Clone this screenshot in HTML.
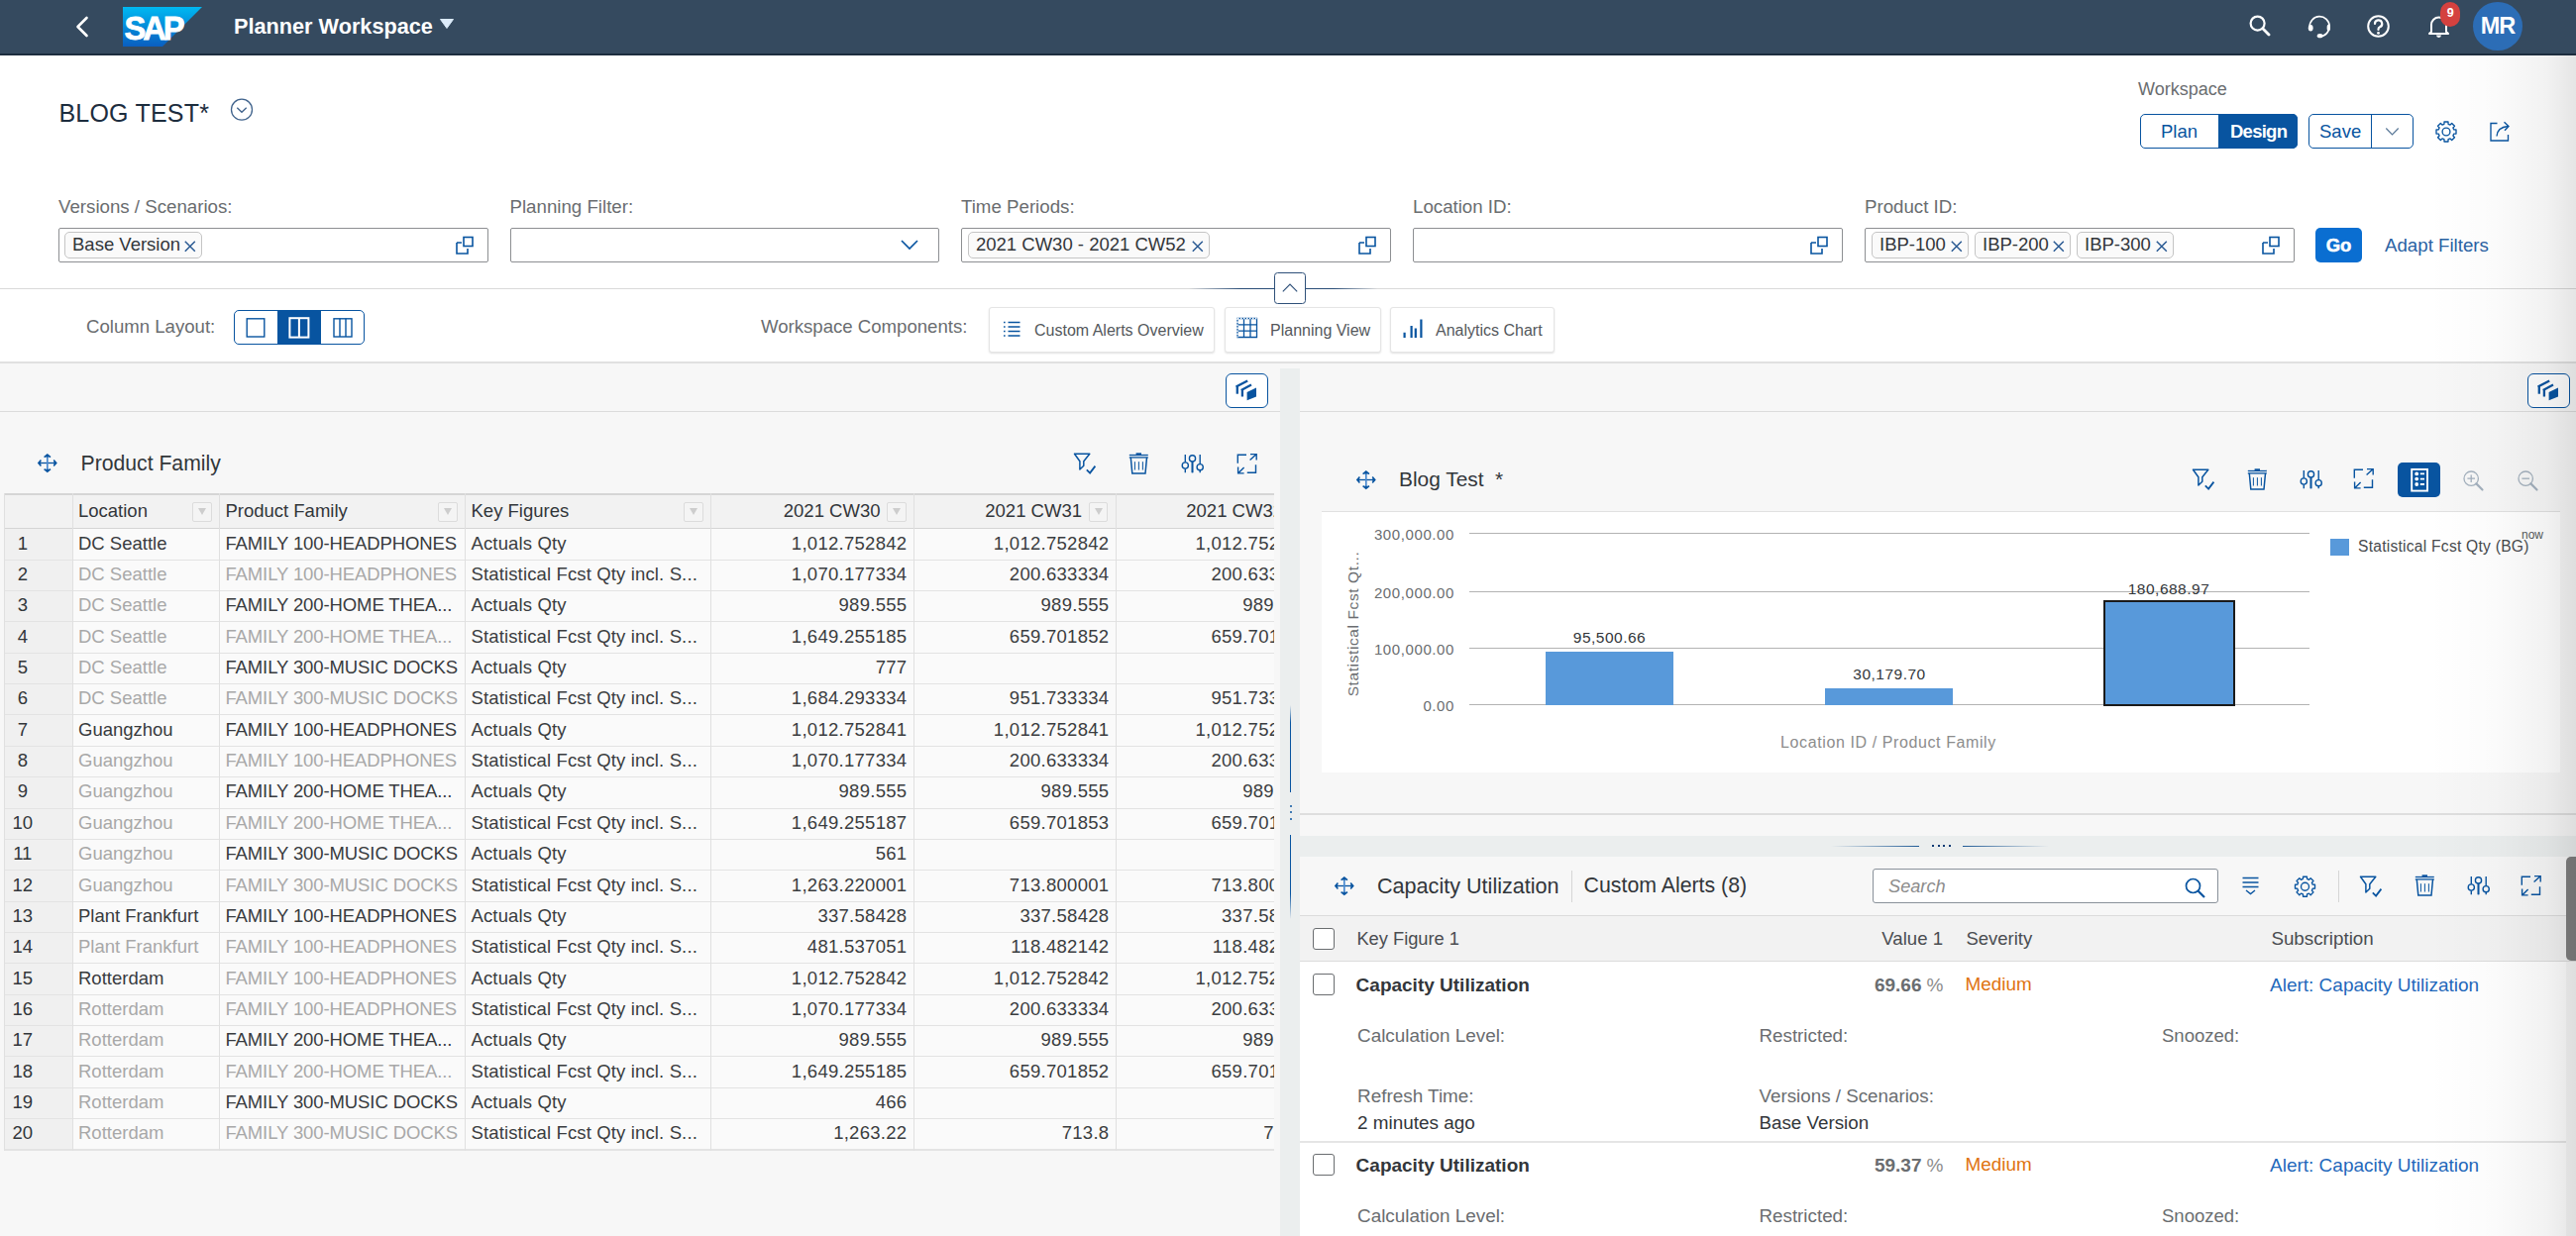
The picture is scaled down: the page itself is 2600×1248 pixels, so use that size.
<!DOCTYPE html><html><head><meta charset="utf-8"><style>
html,body{margin:0;padding:0;width:2600px;height:1248px;overflow:hidden;background:#f7f7f7;font-family:"Liberation Sans", sans-serif;}
.t{position:absolute;line-height:1;white-space:nowrap;}
.b{position:absolute;box-sizing:border-box;}
svg.b{overflow:visible}
</style></head><body>
<div class="b" style="left:0px;top:0px;width:2600px;height:55px;background:#354a5f;"></div>
<div class="b" style="left:0px;top:54px;width:2600px;height:2px;background:#1d2d3e;"></div>
<svg class="b" style="left:74px;top:15px;" width="18" height="24" viewBox="0 0 18 24"><path d="M13.5 3 L4.5 12 L13.5 21" fill="none" stroke="#fff" stroke-width="2.6" stroke-linecap="round" stroke-linejoin="round"/></svg>
<svg class="b" style="left:124px;top:7px;" width="80" height="40" viewBox="0 0 80 40"><defs><linearGradient id="lg" x1="0" y1="0" x2="0" y2="1"><stop offset="0" stop-color="#00b9f2"/><stop offset="1" stop-color="#0a5ec0"/></linearGradient></defs><path d="M0 0 H80 L40 40 H0 Z" fill="url(#lg)"/><text x="1.5" y="33" font-family="Liberation Sans" font-weight="bold" font-size="34" fill="#fff" stroke="#fff" stroke-width="0.8" letter-spacing="-3.2" textLength="58" lengthAdjust="spacingAndGlyphs">SAP</text></svg>
<div class="t" style="left:236.0px;top:15.6px;font-size:21.7px;color:#ffffff;font-weight:bold;">Planner Workspace</div>
<svg class="b" style="left:444px;top:19px;" width="15" height="11" viewBox="0 0 15 11"><path d="M0.5 0.5 H13.5 L7 9.5 Z" fill="#dcebfa" stroke="#dcebfa" stroke-width="1" stroke-linejoin="round"/></svg>
<svg class="b" style="left:2270px;top:15px;" width="22" height="23" viewBox="0 0 22 23"><circle cx="8.6" cy="8.6" r="7" fill="none" stroke="#fff" stroke-width="2.2"/><path d="M13.8 13.8 L20 20" stroke="#fff" stroke-width="2.8" stroke-linecap="round"/></svg>
<svg class="b" style="left:2329px;top:14px;" width="24" height="24" viewBox="0 0 24 24"><path d="M2.2 13.2 A10 10 0 1 1 12.4 22.7" fill="none" stroke="#fff" stroke-width="1.7"/><ellipse cx="3.2" cy="14.2" rx="2.4" ry="3.3" fill="#fff"/><ellipse cx="21.3" cy="14" rx="1.7" ry="3.2" fill="#fff"/><ellipse cx="12.6" cy="22.2" rx="2.9" ry="2.1" fill="#fff"/></svg>
<svg class="b" style="left:2389px;top:15px;" width="24" height="24" viewBox="0 0 24 24"><circle cx="11.5" cy="11.5" r="10.3" fill="none" stroke="#fff" stroke-width="2"/><path d="M8 9 A3.6 3.6 0 1 1 13 12.3 Q11.5 13 11.5 14.5 V15" fill="none" stroke="#fff" stroke-width="2.2" stroke-linecap="round"/><circle cx="11.5" cy="18.3" r="1.4" fill="#fff"/></svg>
<svg class="b" style="left:2450px;top:14px;" width="23" height="25" viewBox="0 0 23 25"><path d="M4 18 V11 A7.5 7.5 0 0 1 19 11 V18 L21 20 H2 Z" fill="none" stroke="#fff" stroke-width="2" stroke-linejoin="round"/><path d="M9 21.5 A2.5 2.5 0 0 0 14 21.5 Z" fill="#fff"/></svg>
<div class="b" style="left:2463px;top:2px;width:20px;height:25px;background:#d4413f;border-radius:10px;"></div>
<div class="t" style="left:2473.2px;top:7.4px;font-size:12.5px;color:#ffffff;font-weight:bold;transform:translateX(-50%);">9</div>
<div class="b" style="left:2496px;top:2px;width:50px;height:49px;background:#2c6db6;border-radius:50%;"></div>
<div class="t" style="left:2521.0px;top:15.1px;font-size:23.5px;color:#ffffff;font-weight:bold;letter-spacing:-1px;transform:translateX(-50%);">MR</div>
<div class="b" style="left:0px;top:56px;width:2600px;height:236px;background:#ffffff;"></div>
<div class="b" style="left:0px;top:291px;width:2600px;height:1px;background:#d9d9d9;"></div>
<div class="t" style="left:59.5px;top:102.0px;font-size:25px;color:#1d2d3e;letter-spacing:0.2px;">BLOG TEST*</div>
<svg class="b" style="left:232px;top:99px;" width="24" height="24" viewBox="0 0 24 24"><circle cx="12" cy="11.7" r="10.5" fill="none" stroke="#40638c" stroke-width="1.3"/><path d="M7.3 9.8 L12 14.3 L16.7 9.8" fill="none" stroke="#40638c" stroke-width="1.3"/></svg>
<div class="t" style="left:2158.0px;top:80.5px;font-size:18px;color:#6a6d70;">Workspace</div>
<div class="b" style="left:2160px;top:115px;width:159px;height:35px;border:1.3px solid #0854a0;border-radius:5px;background:#fff;overflow:hidden;"></div>
<div class="b" style="left:2239px;top:115px;width:80px;height:35px;background:#0854a0;border-radius:0 5px 5px 0;"></div>
<div class="t" style="left:2181.0px;top:124.1px;font-size:18.5px;color:#0854a0;">Plan</div>
<div class="t" style="left:2251.0px;top:124.1px;font-size:18.5px;color:#ffffff;font-weight:bold;letter-spacing:-0.75px;">Design</div>
<div class="b" style="left:2330px;top:115px;width:106px;height:35px;border:1.3px solid #0854a0;border-radius:5px;background:#fff;"></div>
<div class="b" style="left:2393px;top:115px;width:1px;height:35px;background:#0854a0;"></div>
<div class="t" style="left:2341.0px;top:124.1px;font-size:18.5px;color:#0854a0;">Save</div>
<svg class="b" style="left:2406px;top:127px;" width="17" height="12" viewBox="0 0 17 12"><path d="M2.3 2.5 L8.5 9 L14.7 2.5" fill="none" stroke="#5a7898" stroke-width="1.2"/></svg>
<svg class="b" style="left:2457px;top:121px;" width="24" height="24" viewBox="0 0 24 24"><g fill="none" stroke="#0854a0" stroke-width="1.35" stroke-linejoin="round"><circle cx="12" cy="12" r="3.9"/><path d="M19.73 9.95 L22.00 10.01 L22.00 13.99 L19.73 14.05 L18.92 16.02 L20.48 17.67 L17.67 20.48 L16.02 18.92 L14.05 19.73 L13.99 22.00 L10.01 22.00 L9.95 19.73 L7.98 18.92 L6.33 20.48 L3.52 17.67 L5.08 16.02 L4.27 14.05 L2.00 13.99 L2.00 10.01 L4.27 9.95 L5.08 7.98 L3.52 6.33 L6.33 3.52 L7.98 5.08 L9.95 4.27 L10.01 2.00 L13.99 2.00 L14.05 4.27 L16.02 5.08 L17.67 3.52 L20.48 6.33 L18.92 7.98 Z"/></g></svg>
<svg class="b" style="left:2512px;top:121px;" width="24" height="23" viewBox="0 0 24 23"><g fill="none" stroke="#0854a0" stroke-width="1.35"><path d="M8.5 3.5 H2 V21 H19.5 V15"/><path d="M8 16.5 Q8.5 7.5 19.5 6.5"/><path d="M15.5 2.2 L20 6.5 L16 10.8"/></g></svg>
<div class="t" style="left:59.0px;top:200.2px;font-size:18.7px;color:#6a6d70;">Versions / Scenarios:</div>
<div class="b" style="left:59px;top:230px;width:433.5px;height:35px;border:1.3px solid #8d8f92;border-radius:2px;background:#fff;"></div>
<svg class="b" style="left:459px;top:238px;" width="20" height="20" viewBox="0 0 20 20"><path d="M2 7 H7 M2 7 V18 H13 V13" fill="none" stroke="#0854a0" stroke-width="1.6"/><rect x="9" y="1.5" width="9" height="9" fill="none" stroke="#0854a0" stroke-width="1.6"/></svg>
<div class="t" style="left:514.5px;top:200.2px;font-size:18.7px;color:#6a6d70;">Planning Filter:</div>
<div class="b" style="left:514.5px;top:230px;width:433.5px;height:35px;border:1.3px solid #8d8f92;border-radius:2px;background:#fff;"></div>
<svg class="b" style="left:906.5px;top:240px;" width="22" height="14" viewBox="0 0 22 14"><path d="M3 3 L11 11 L19 3" fill="none" stroke="#0854a0" stroke-width="1.7"/></svg>
<div class="t" style="left:970.0px;top:200.2px;font-size:18.7px;color:#6a6d70;">Time Periods:</div>
<div class="b" style="left:970px;top:230px;width:433.5px;height:35px;border:1.3px solid #8d8f92;border-radius:2px;background:#fff;"></div>
<svg class="b" style="left:1370px;top:238px;" width="20" height="20" viewBox="0 0 20 20"><path d="M2 7 H7 M2 7 V18 H13 V13" fill="none" stroke="#0854a0" stroke-width="1.6"/><rect x="9" y="1.5" width="9" height="9" fill="none" stroke="#0854a0" stroke-width="1.6"/></svg>
<div class="t" style="left:1426.0px;top:200.2px;font-size:18.7px;color:#6a6d70;">Location ID:</div>
<div class="b" style="left:1426px;top:230px;width:433.5px;height:35px;border:1.3px solid #8d8f92;border-radius:2px;background:#fff;"></div>
<svg class="b" style="left:1826px;top:238px;" width="20" height="20" viewBox="0 0 20 20"><path d="M2 7 H7 M2 7 V18 H13 V13" fill="none" stroke="#0854a0" stroke-width="1.6"/><rect x="9" y="1.5" width="9" height="9" fill="none" stroke="#0854a0" stroke-width="1.6"/></svg>
<div class="t" style="left:1882.0px;top:200.2px;font-size:18.7px;color:#6a6d70;">Product ID:</div>
<div class="b" style="left:1882px;top:230px;width:433.5px;height:35px;border:1.3px solid #8d8f92;border-radius:2px;background:#fff;"></div>
<svg class="b" style="left:2282px;top:238px;" width="20" height="20" viewBox="0 0 20 20"><path d="M2 7 H7 M2 7 V18 H13 V13" fill="none" stroke="#0854a0" stroke-width="1.6"/><rect x="9" y="1.5" width="9" height="9" fill="none" stroke="#0854a0" stroke-width="1.6"/></svg>
<div class="b" style="left:65px;top:234px;width:139px;height:27px;border:1.2px solid #c5c5c5;border-radius:5px;background:#fafafa;"></div>
<div class="t" style="left:73.0px;top:238.0px;font-size:18.5px;color:#32363a;">Base Version</div>
<svg class="b" style="left:186px;top:242.5px;" width="12" height="12" viewBox="0 0 12 12"><path d="M0.8 0.8 L10.8 10.8 M10.8 0.8 L0.8 10.8" stroke="#2a5a93" stroke-width="1.5"/></svg>
<div class="b" style="left:977px;top:234px;width:244px;height:27px;border:1.2px solid #c5c5c5;border-radius:5px;background:#fafafa;"></div>
<div class="t" style="left:985.0px;top:238.0px;font-size:18.5px;color:#32363a;">2021 CW30 - 2021 CW52</div>
<svg class="b" style="left:1203px;top:242.5px;" width="12" height="12" viewBox="0 0 12 12"><path d="M0.8 0.8 L10.8 10.8 M10.8 0.8 L0.8 10.8" stroke="#2a5a93" stroke-width="1.5"/></svg>
<div class="b" style="left:1889px;top:234px;width:98px;height:27px;border:1.2px solid #c5c5c5;border-radius:5px;background:#fafafa;"></div>
<div class="t" style="left:1897.0px;top:238.0px;font-size:18.5px;color:#32363a;">IBP-100</div>
<svg class="b" style="left:1969px;top:242.5px;" width="12" height="12" viewBox="0 0 12 12"><path d="M0.8 0.8 L10.8 10.8 M10.8 0.8 L0.8 10.8" stroke="#2a5a93" stroke-width="1.5"/></svg>
<div class="b" style="left:1993px;top:234px;width:97px;height:27px;border:1.2px solid #c5c5c5;border-radius:5px;background:#fafafa;"></div>
<div class="t" style="left:2001.0px;top:238.0px;font-size:18.5px;color:#32363a;">IBP-200</div>
<svg class="b" style="left:2072px;top:242.5px;" width="12" height="12" viewBox="0 0 12 12"><path d="M0.8 0.8 L10.8 10.8 M10.8 0.8 L0.8 10.8" stroke="#2a5a93" stroke-width="1.5"/></svg>
<div class="b" style="left:2096px;top:234px;width:98px;height:27px;border:1.2px solid #c5c5c5;border-radius:5px;background:#fafafa;"></div>
<div class="t" style="left:2104.0px;top:238.0px;font-size:18.5px;color:#32363a;">IBP-300</div>
<svg class="b" style="left:2176px;top:242.5px;" width="12" height="12" viewBox="0 0 12 12"><path d="M0.8 0.8 L10.8 10.8 M10.8 0.8 L0.8 10.8" stroke="#2a5a93" stroke-width="1.5"/></svg>
<div class="b" style="left:2337px;top:230px;width:47px;height:35px;background:#0a6ed1;border-radius:5px;"></div>
<div class="t" style="left:2360.5px;top:239.0px;font-size:18.5px;color:#ffffff;font-weight:bold;transform:translateX(-50%);-webkit-text-stroke:0.5px #fff;">Go</div>
<div class="t" style="left:2407.0px;top:238.7px;font-size:18.7px;color:#2a62a3;">Adapt Filters</div>
<div class="b" style="left:0px;top:292px;width:2600px;height:74px;background:#ffffff;"></div>
<div class="b" style="left:0px;top:365px;width:2600px;height:2px;background:#e0e0e0;"></div>
<div class="b" style="left:1200px;top:290.8px;width:87px;height:1.1999999999999886px;background:linear-gradient(90deg,rgba(43,78,120,0),#2b4e78 60%);"></div>
<div class="b" style="left:1317px;top:290.8px;width:73px;height:1.1999999999999886px;background:linear-gradient(90deg,#2b4e78 40%,rgba(43,78,120,0));"></div>
<div class="b" style="left:1286px;top:275px;width:32px;height:32px;border:1.3px solid #2f5079;border-radius:3.5px;background:#fff;"></div>
<svg class="b" style="left:1293px;top:282px;" width="18" height="14" viewBox="0 0 18 14"><path d="M1.8 12.4 L9 5.2 L16.2 12.4" fill="none" stroke="#2f5079" stroke-width="1.2"/></svg>
<div class="t" style="left:87.0px;top:321.1px;font-size:18.6px;color:#6a6d70;">Column Layout:</div>
<div class="b" style="left:236px;top:313px;width:132px;height:35px;border:1.3px solid #0854a0;border-radius:5px;background:#fff;overflow:hidden;"></div>
<div class="b" style="left:280px;top:313px;width:44px;height:35px;background:#0854a0;"></div>
<svg class="b" style="left:246px;top:319px;" width="24" height="24" viewBox="0 0 24 24"><rect x="3.2" y="2.8" width="17.6" height="18.2" fill="none" stroke="#0854a0" stroke-width="1.4"/></svg>
<svg class="b" style="left:290px;top:319px;" width="24" height="24" viewBox="0 0 24 24"><rect x="2.4" y="2.2" width="19" height="19.4" fill="none" stroke="#fff" stroke-width="2"/><path d="M11.9 2.2 V21.6" stroke="#fff" stroke-width="2"/></svg>
<svg class="b" style="left:334px;top:319px;" width="24" height="24" viewBox="0 0 24 24"><rect x="3" y="2.8" width="18" height="18.2" fill="none" stroke="#0854a0" stroke-width="1.4"/><path d="M9 2.8 V21 M15 2.8 V21" stroke="#0854a0" stroke-width="1.4"/></svg>
<div class="t" style="left:768.0px;top:321.1px;font-size:18.6px;color:#6a6d70;">Workspace Components:</div>
<div class="b" style="left:998px;top:310px;width:228px;height:46px;background:#fff;border:1px solid #e5e5e5;border-radius:3px;box-shadow:0 1px 2px rgba(0,0,0,0.12);"></div>

<div class="t" style="left:1044.0px;top:325.5px;font-size:16px;color:#54585c;">Custom Alerts Overview</div>
<svg class="b" style="left:1012px;top:322px;" width="20" height="20" viewBox="0 0 20 20"><g stroke="#0854a0" stroke-width="1.3"><path d="M5.5 3.5 H17.5 M5.5 8 H17.5 M5.5 12.5 H17.5 M5.5 17 H17.5"/><path d="M1 3.5 H2.6 M1 8 H2.6 M1 12.5 H2.6 M1 17 H2.6"/></g></svg>
<div class="b" style="left:1236px;top:310px;width:158px;height:46px;background:#fff;border:1px solid #e5e5e5;border-radius:3px;box-shadow:0 1px 2px rgba(0,0,0,0.12);"></div>

<div class="t" style="left:1282.0px;top:325.5px;font-size:16px;color:#54585c;">Planning View</div>
<svg class="b" style="left:1247px;top:320px;" width="24" height="23" viewBox="0 0 24 23"><g fill="none" stroke="#0854a0" stroke-width="1.3"><path d="M2 1.5 H21.5 V20.5 H2 Z" stroke-dasharray="none"/><path d="M2 7.8 H21.5 M2 14.2 H21.5 M8.5 1.5 V20.5 M15 1.5 V20.5"/></g><path d="M2 1.5 H21.5 M2 1.5 V20.5" stroke="#fff" stroke-width="1.5" stroke-dasharray="1.5 1.5"/></svg>
<div class="b" style="left:1403px;top:310px;width:166px;height:46px;background:#fff;border:1px solid #e5e5e5;border-radius:3px;box-shadow:0 1px 2px rgba(0,0,0,0.12);"></div>

<div class="t" style="left:1449.0px;top:325.5px;font-size:16px;color:#54585c;">Analytics Chart</div>
<svg class="b" style="left:1414px;top:320px;" width="24" height="24" viewBox="0 0 24 24"><g stroke="#0854a0" stroke-width="2.2"><path d="M3.6 21 V15.8 M10.6 21 V9 M14.8 21 V11.4 M20.4 21 V2.6"/></g></svg>
<div class="b" style="left:0px;top:415px;width:1292px;height:1px;background:#dcdcdc;"></div>
<div class="b" style="left:1312px;top:415px;width:1288px;height:1px;background:#dcdcdc;"></div>
<div class="b" style="left:1237px;top:377px;width:43px;height:35px;border:1.3px solid #0854a0;border-radius:6px;background:#fff;"></div>
<svg class="b" style="left:1237px;top:377px;" width="43" height="35" viewBox="0 0 43 35"><g fill="none" stroke="#0854a0" stroke-width="2.3" stroke-linecap="butt"><path d="M10.6 13.6 L22.2 7.5"/><path d="M11.8 13 V20.7"/><path d="M15.8 16.9 L26 11.6"/><path d="M16.9 16.3 V23.5"/></g><path d="M21.6 19.1 L31 14.5 V23.5 L21.6 27.2 Z" fill="#0854a0"/></svg>
<div class="b" style="left:2551px;top:377px;width:43px;height:35px;border:1.3px solid #0854a0;border-radius:6px;background:#fff;"></div>
<svg class="b" style="left:2551px;top:377px;" width="43" height="35" viewBox="0 0 43 35"><g fill="none" stroke="#0854a0" stroke-width="2.3" stroke-linecap="butt"><path d="M10.6 13.6 L22.2 7.5"/><path d="M11.8 13 V20.7"/><path d="M15.8 16.9 L26 11.6"/><path d="M16.9 16.3 V23.5"/></g><path d="M21.6 19.1 L31 14.5 V23.5 L21.6 27.2 Z" fill="#0854a0"/></svg>
<div class="b" style="left:1292px;top:372px;width:20px;height:876px;background:#ebeeee;"></div>
<div class="b" style="left:1302px;top:712px;width:1.2999999999999545px;height:88px;background:linear-gradient(180deg,rgba(8,84,160,0),#0854a0 20%);"></div>
<div class="b" style="left:1302px;top:843px;width:1.2999999999999545px;height:85px;background:linear-gradient(180deg,#0854a0 70%,rgba(8,84,160,0));"></div>
<div class="b" style="left:1301.6px;top:812.5px;width:2.2000000000000455px;height:2.3999999999999773px;background:#0854a0;border-radius:1px;"></div>
<div class="b" style="left:1301.6px;top:819px;width:2.2000000000000455px;height:2.3999999999999773px;background:#0854a0;border-radius:1px;"></div>
<div class="b" style="left:1301.6px;top:825.5px;width:2.2000000000000455px;height:2.3999999999999773px;background:#0854a0;border-radius:1px;"></div>
<svg class="b" style="left:38px;top:458px;" width="20" height="20" viewBox="0 0 20 20"><path d="M1.5 9.5 H18" stroke="#0854a0" stroke-width="1.3"/><path d="M9.8 2 V17.2" stroke="#4a8ad0" stroke-width="1.7"/><g fill="none" stroke="#0854a0" stroke-width="1.5" stroke-linejoin="miter"><path d="M6.6 3.6 L9.8 0.9 L13 3.6"/><path d="M6.6 15.6 L9.8 18.3 L13 15.6"/><path d="M3.4 6.5 L0.8 9.5 L3.4 12.5"/><path d="M16.2 6.5 L18.8 9.5 L16.2 12.5"/></g><g fill="#0854a0"><path d="M9.8 1.2 L12 3.4 H7.6 Z"/><path d="M9.8 18 L12 15.8 H7.6 Z"/><path d="M1.1 9.5 L3.2 7.4 V11.6 Z"/><path d="M18.5 9.5 L16.4 7.4 V11.6 Z"/></g></svg>
<div class="t" style="left:81.5px;top:457.1px;font-size:21.2px;color:#32363a;">Product Family</div>
<svg class="b" style="left:1083px;top:456px;" width="24" height="24" viewBox="0 0 24 24"><path d="M1.5 2.2 H16.8 L10.8 9.8 V14.2 L6.9 18 V9.8 Z" fill="none" stroke="#0854a0" stroke-width="1.5" stroke-linejoin="round"/><path d="M13.8 18.4 L17.1 21.6 L22.4 14.6" fill="none" stroke="#0854a0" stroke-width="1.8"/></svg>
<svg class="b" style="left:1139px;top:456px;" width="21" height="24" viewBox="0 0 21 24"><g fill="none" stroke="#0854a0"><path d="M0.8 3.5 H19.8" stroke-width="1.3"/><path d="M0.8 5.9 H19.8" stroke-width="1.3"/><path d="M7.6 2.2 H13" stroke-width="1.8"/><path d="M2.3 6 L3.8 22 H17 L18.5 6" stroke-width="1.5"/><path d="M6.4 10.2 V18.5 M10.4 10.2 V18.5 M14.4 10.2 V18.5" stroke-width="1"/></g></svg>
<svg class="b" style="left:1190px;top:456px;" width="24" height="24" viewBox="0 0 24 24"><g fill="none" stroke="#0854a0" stroke-width="1.4"><path d="M6.3 3 V10.8 M6.3 17.2 V21.2 M13.5 3 V3.7 M13.5 10.1 V21.2 M21.2 3 V12.5 M21.2 18.9 V21.2"/><path d="M13.5 10.1 V21.2" stroke-width="1.8"/><circle cx="6.3" cy="14" r="3.1"/><circle cx="13.5" cy="6.9" r="3.1"/><circle cx="21.2" cy="15.7" r="3.1"/></g></svg>
<svg class="b" style="left:1247px;top:456px;" width="24" height="24" viewBox="0 0 24 24"><g fill="none" stroke="#0854a0" stroke-width="1.4"><path d="M2.3 11.7 V3.3 H11"/><path d="M14.6 8.6 L21.2 2.6 M15 2.6 H21.2 V8.6"/><path d="M20.5 13.3 V21.2 H11.8"/><path d="M2.6 21.9 L8.6 15.9 M2.6 15.6 V21.9 H8.6"/></g></svg>
<div class="b" style="left:0;top:0;width:1285.5px;height:1248px;overflow:hidden;">
<div class="b" style="left:4px;top:498px;width:1326px;height:36px;background:#f2f2f2;border-top:2px solid #d5d5d5;border-bottom:1.5px solid #d5d5d5;"></div>
<div class="b" style="left:4px;top:534px;width:1326px;height:628px;background:#fafafa;"></div>
<div class="b" style="left:4px;top:534px;width:69px;height:628px;background:#f0f0f0;"></div>
<div class="b" style="left:4px;top:565px;width:1326px;height:1px;background:#e3e3e3;"></div>
<div class="b" style="left:4px;top:596px;width:1326px;height:1px;background:#e3e3e3;"></div>
<div class="b" style="left:4px;top:627px;width:1326px;height:1px;background:#e3e3e3;"></div>
<div class="b" style="left:4px;top:659px;width:1326px;height:1px;background:#e3e3e3;"></div>
<div class="b" style="left:4px;top:690px;width:1326px;height:1px;background:#e3e3e3;"></div>
<div class="b" style="left:4px;top:721px;width:1326px;height:1px;background:#e3e3e3;"></div>
<div class="b" style="left:4px;top:753px;width:1326px;height:1px;background:#e3e3e3;"></div>
<div class="b" style="left:4px;top:784px;width:1326px;height:1px;background:#e3e3e3;"></div>
<div class="b" style="left:4px;top:816px;width:1326px;height:1px;background:#e3e3e3;"></div>
<div class="b" style="left:4px;top:847px;width:1326px;height:1px;background:#e3e3e3;"></div>
<div class="b" style="left:4px;top:878px;width:1326px;height:1px;background:#e3e3e3;"></div>
<div class="b" style="left:4px;top:910px;width:1326px;height:1px;background:#e3e3e3;"></div>
<div class="b" style="left:4px;top:941px;width:1326px;height:1px;background:#e3e3e3;"></div>
<div class="b" style="left:4px;top:972px;width:1326px;height:1px;background:#e3e3e3;"></div>
<div class="b" style="left:4px;top:1004px;width:1326px;height:1px;background:#e3e3e3;"></div>
<div class="b" style="left:4px;top:1035px;width:1326px;height:1px;background:#e3e3e3;"></div>
<div class="b" style="left:4px;top:1066px;width:1326px;height:1px;background:#e3e3e3;"></div>
<div class="b" style="left:4px;top:1098px;width:1326px;height:1px;background:#e3e3e3;"></div>
<div class="b" style="left:4px;top:1129px;width:1326px;height:1px;background:#e3e3e3;"></div>
<div class="b" style="left:4px;top:1160px;width:1326px;height:2px;background:#e3e3e3;"></div>
<div class="b" style="left:4.0px;top:498px;width:1.0px;height:664px;background:#e0e0e0;"></div>
<div class="b" style="left:72.5px;top:498px;width:1.0px;height:664px;background:#e0e0e0;"></div>
<div class="b" style="left:220.9px;top:498px;width:1.0px;height:664px;background:#e0e0e0;"></div>
<div class="b" style="left:469.0px;top:498px;width:1.0px;height:664px;background:#e0e0e0;"></div>
<div class="b" style="left:717.0px;top:498px;width:1.0px;height:664px;background:#e0e0e0;"></div>
<div class="b" style="left:921.9px;top:498px;width:1.0px;height:664px;background:#e0e0e0;"></div>
<div class="b" style="left:1125.9px;top:498px;width:1.0px;height:664px;background:#e0e0e0;"></div>
<div class="t" style="left:79.0px;top:506.9px;font-size:18.5px;color:#32363a;">Location</div>
<div class="t" style="left:227.4px;top:506.9px;font-size:18.5px;color:#32363a;">Product Family</div>
<div class="t" style="left:475.5px;top:506.9px;font-size:18.5px;color:#32363a;">Key Figures</div>
<div class="b" style="left:194.1px;top:506.5px;width:19.5px;height:20.0px;border:1.2px solid #dcdcdc;border-radius:2px;background:#f4f4f4;"></div>
<svg class="b" style="left:199.9px;top:512.5px;" width="9" height="8" viewBox="0 0 9 8"><path d="M0 0 H8 L4 7 Z" fill="#cdcdcd"/></svg>
<div class="b" style="left:442.2px;top:506.5px;width:19.5px;height:20.0px;border:1.2px solid #dcdcdc;border-radius:2px;background:#f4f4f4;"></div>
<svg class="b" style="left:448.0px;top:512.5px;" width="9" height="8" viewBox="0 0 9 8"><path d="M0 0 H8 L4 7 Z" fill="#cdcdcd"/></svg>
<div class="b" style="left:690.4px;top:506.5px;width:19.5px;height:20.0px;border:1.2px solid #dcdcdc;border-radius:2px;background:#f4f4f4;"></div>
<svg class="b" style="left:696.1999999999999px;top:512.5px;" width="9" height="8" viewBox="0 0 9 8"><path d="M0 0 H8 L4 7 Z" fill="#cdcdcd"/></svg>
<div class="t" style="left:888.5px;top:506.9px;font-size:18.5px;color:#32363a;transform:translateX(-100%);">2021 CW30</div>
<div class="b" style="left:895.0px;top:506.5px;width:19.5px;height:20.0px;border:1.2px solid #dcdcdc;border-radius:2px;background:#f4f4f4;"></div>
<svg class="b" style="left:900.8px;top:512.5px;" width="9" height="8" viewBox="0 0 9 8"><path d="M0 0 H8 L4 7 Z" fill="#cdcdcd"/></svg>
<div class="t" style="left:1092.0px;top:506.9px;font-size:18.5px;color:#32363a;transform:translateX(-100%);">2021 CW31</div>
<div class="b" style="left:1098.7px;top:506.5px;width:19.5px;height:20.0px;border:1.2px solid #dcdcdc;border-radius:2px;background:#f4f4f4;"></div>
<svg class="b" style="left:1104.5px;top:512.5px;" width="9" height="8" viewBox="0 0 9 8"><path d="M0 0 H8 L4 7 Z" fill="#cdcdcd"/></svg>
<div class="t" style="left:1295.0px;top:506.9px;font-size:18.5px;color:#32363a;transform:translateX(-100%);">2021 CW32</div>
<div class="t" style="left:22.8px;top:539.5px;font-size:18.5px;color:#32363a;transform:translateX(-50%);">1</div>
<div class="t" style="left:79.0px;top:539.5px;font-size:18.5px;color:#383b3e;">DC Seattle</div>
<div class="t" style="left:227.4px;top:539.5px;font-size:18.5px;color:#383b3e;letter-spacing:-0.1px;">FAMILY 100-HEADPHONES</div>
<div class="t" style="left:475.5px;top:539.5px;font-size:18.5px;color:#3a3d40;letter-spacing:0.14px;">Actuals Qty</div>
<div class="t" style="left:915.4px;top:539.5px;font-size:18.5px;color:#3a3d40;letter-spacing:0.28px;transform:translateX(-100%);">1,012.752842</div>
<div class="t" style="left:1119.4px;top:539.5px;font-size:18.5px;color:#3a3d40;letter-spacing:0.28px;transform:translateX(-100%);">1,012.752842</div>
<div class="t" style="left:1323.0px;top:539.5px;font-size:18.5px;color:#3a3d40;letter-spacing:0.28px;transform:translateX(-100%);">1,012.752842</div>
<div class="t" style="left:22.8px;top:570.9px;font-size:18.5px;color:#32363a;transform:translateX(-50%);">2</div>
<div class="t" style="left:79.0px;top:570.9px;font-size:18.5px;color:#a8a8a8;">DC Seattle</div>
<div class="t" style="left:227.4px;top:570.9px;font-size:18.5px;color:#a8a8a8;letter-spacing:-0.1px;">FAMILY 100-HEADPHONES</div>
<div class="t" style="left:475.5px;top:570.9px;font-size:18.5px;color:#3a3d40;letter-spacing:0.14px;">Statistical Fcst Qty incl. S...</div>
<div class="t" style="left:915.4px;top:570.9px;font-size:18.5px;color:#3a3d40;letter-spacing:0.28px;transform:translateX(-100%);">1,070.177334</div>
<div class="t" style="left:1119.4px;top:570.9px;font-size:18.5px;color:#3a3d40;letter-spacing:0.28px;transform:translateX(-100%);">200.633334</div>
<div class="t" style="left:1323.0px;top:570.9px;font-size:18.5px;color:#3a3d40;letter-spacing:0.28px;transform:translateX(-100%);">200.633334</div>
<div class="t" style="left:22.8px;top:602.3px;font-size:18.5px;color:#32363a;transform:translateX(-50%);">3</div>
<div class="t" style="left:79.0px;top:602.3px;font-size:18.5px;color:#a8a8a8;">DC Seattle</div>
<div class="t" style="left:227.4px;top:602.3px;font-size:18.5px;color:#383b3e;letter-spacing:-0.1px;">FAMILY 200-HOME THEA...</div>
<div class="t" style="left:475.5px;top:602.3px;font-size:18.5px;color:#3a3d40;letter-spacing:0.14px;">Actuals Qty</div>
<div class="t" style="left:915.4px;top:602.3px;font-size:18.5px;color:#3a3d40;letter-spacing:0.28px;transform:translateX(-100%);">989.555</div>
<div class="t" style="left:1119.4px;top:602.3px;font-size:18.5px;color:#3a3d40;letter-spacing:0.28px;transform:translateX(-100%);">989.555</div>
<div class="t" style="left:1323.0px;top:602.3px;font-size:18.5px;color:#3a3d40;letter-spacing:0.28px;transform:translateX(-100%);">989.555</div>
<div class="t" style="left:22.8px;top:633.6px;font-size:18.5px;color:#32363a;transform:translateX(-50%);">4</div>
<div class="t" style="left:79.0px;top:633.6px;font-size:18.5px;color:#a8a8a8;">DC Seattle</div>
<div class="t" style="left:227.4px;top:633.6px;font-size:18.5px;color:#a8a8a8;letter-spacing:-0.1px;">FAMILY 200-HOME THEA...</div>
<div class="t" style="left:475.5px;top:633.6px;font-size:18.5px;color:#3a3d40;letter-spacing:0.14px;">Statistical Fcst Qty incl. S...</div>
<div class="t" style="left:915.4px;top:633.6px;font-size:18.5px;color:#3a3d40;letter-spacing:0.28px;transform:translateX(-100%);">1,649.255185</div>
<div class="t" style="left:1119.4px;top:633.6px;font-size:18.5px;color:#3a3d40;letter-spacing:0.28px;transform:translateX(-100%);">659.701852</div>
<div class="t" style="left:1323.0px;top:633.6px;font-size:18.5px;color:#3a3d40;letter-spacing:0.28px;transform:translateX(-100%);">659.701852</div>
<div class="t" style="left:22.8px;top:665.0px;font-size:18.5px;color:#32363a;transform:translateX(-50%);">5</div>
<div class="t" style="left:79.0px;top:665.0px;font-size:18.5px;color:#a8a8a8;">DC Seattle</div>
<div class="t" style="left:227.4px;top:665.0px;font-size:18.5px;color:#383b3e;letter-spacing:-0.1px;">FAMILY 300-MUSIC DOCKS</div>
<div class="t" style="left:475.5px;top:665.0px;font-size:18.5px;color:#3a3d40;letter-spacing:0.14px;">Actuals Qty</div>
<div class="t" style="left:915.4px;top:665.0px;font-size:18.5px;color:#3a3d40;letter-spacing:0.28px;transform:translateX(-100%);">777</div>
<div class="t" style="left:1119.4px;top:665.0px;font-size:18.5px;color:#3a3d40;letter-spacing:0.28px;transform:translateX(-100%);"></div>
<div class="t" style="left:1323.0px;top:665.0px;font-size:18.5px;color:#3a3d40;letter-spacing:0.28px;transform:translateX(-100%);"></div>
<div class="t" style="left:22.8px;top:696.3px;font-size:18.5px;color:#32363a;transform:translateX(-50%);">6</div>
<div class="t" style="left:79.0px;top:696.3px;font-size:18.5px;color:#a8a8a8;">DC Seattle</div>
<div class="t" style="left:227.4px;top:696.3px;font-size:18.5px;color:#a8a8a8;letter-spacing:-0.1px;">FAMILY 300-MUSIC DOCKS</div>
<div class="t" style="left:475.5px;top:696.3px;font-size:18.5px;color:#3a3d40;letter-spacing:0.14px;">Statistical Fcst Qty incl. S...</div>
<div class="t" style="left:915.4px;top:696.3px;font-size:18.5px;color:#3a3d40;letter-spacing:0.28px;transform:translateX(-100%);">1,684.293334</div>
<div class="t" style="left:1119.4px;top:696.3px;font-size:18.5px;color:#3a3d40;letter-spacing:0.28px;transform:translateX(-100%);">951.733334</div>
<div class="t" style="left:1323.0px;top:696.3px;font-size:18.5px;color:#3a3d40;letter-spacing:0.28px;transform:translateX(-100%);">951.733334</div>
<div class="t" style="left:22.8px;top:727.7px;font-size:18.5px;color:#32363a;transform:translateX(-50%);">7</div>
<div class="t" style="left:79.0px;top:727.7px;font-size:18.5px;color:#383b3e;">Guangzhou</div>
<div class="t" style="left:227.4px;top:727.7px;font-size:18.5px;color:#383b3e;letter-spacing:-0.1px;">FAMILY 100-HEADPHONES</div>
<div class="t" style="left:475.5px;top:727.7px;font-size:18.5px;color:#3a3d40;letter-spacing:0.14px;">Actuals Qty</div>
<div class="t" style="left:915.4px;top:727.7px;font-size:18.5px;color:#3a3d40;letter-spacing:0.28px;transform:translateX(-100%);">1,012.752841</div>
<div class="t" style="left:1119.4px;top:727.7px;font-size:18.5px;color:#3a3d40;letter-spacing:0.28px;transform:translateX(-100%);">1,012.752841</div>
<div class="t" style="left:1323.0px;top:727.7px;font-size:18.5px;color:#3a3d40;letter-spacing:0.28px;transform:translateX(-100%);">1,012.752841</div>
<div class="t" style="left:22.8px;top:759.1px;font-size:18.5px;color:#32363a;transform:translateX(-50%);">8</div>
<div class="t" style="left:79.0px;top:759.1px;font-size:18.5px;color:#a8a8a8;">Guangzhou</div>
<div class="t" style="left:227.4px;top:759.1px;font-size:18.5px;color:#a8a8a8;letter-spacing:-0.1px;">FAMILY 100-HEADPHONES</div>
<div class="t" style="left:475.5px;top:759.1px;font-size:18.5px;color:#3a3d40;letter-spacing:0.14px;">Statistical Fcst Qty incl. S...</div>
<div class="t" style="left:915.4px;top:759.1px;font-size:18.5px;color:#3a3d40;letter-spacing:0.28px;transform:translateX(-100%);">1,070.177334</div>
<div class="t" style="left:1119.4px;top:759.1px;font-size:18.5px;color:#3a3d40;letter-spacing:0.28px;transform:translateX(-100%);">200.633334</div>
<div class="t" style="left:1323.0px;top:759.1px;font-size:18.5px;color:#3a3d40;letter-spacing:0.28px;transform:translateX(-100%);">200.633334</div>
<div class="t" style="left:22.8px;top:790.4px;font-size:18.5px;color:#32363a;transform:translateX(-50%);">9</div>
<div class="t" style="left:79.0px;top:790.4px;font-size:18.5px;color:#a8a8a8;">Guangzhou</div>
<div class="t" style="left:227.4px;top:790.4px;font-size:18.5px;color:#383b3e;letter-spacing:-0.1px;">FAMILY 200-HOME THEA...</div>
<div class="t" style="left:475.5px;top:790.4px;font-size:18.5px;color:#3a3d40;letter-spacing:0.14px;">Actuals Qty</div>
<div class="t" style="left:915.4px;top:790.4px;font-size:18.5px;color:#3a3d40;letter-spacing:0.28px;transform:translateX(-100%);">989.555</div>
<div class="t" style="left:1119.4px;top:790.4px;font-size:18.5px;color:#3a3d40;letter-spacing:0.28px;transform:translateX(-100%);">989.555</div>
<div class="t" style="left:1323.0px;top:790.4px;font-size:18.5px;color:#3a3d40;letter-spacing:0.28px;transform:translateX(-100%);">989.555</div>
<div class="t" style="left:22.8px;top:821.8px;font-size:18.5px;color:#32363a;transform:translateX(-50%);">10</div>
<div class="t" style="left:79.0px;top:821.8px;font-size:18.5px;color:#a8a8a8;">Guangzhou</div>
<div class="t" style="left:227.4px;top:821.8px;font-size:18.5px;color:#a8a8a8;letter-spacing:-0.1px;">FAMILY 200-HOME THEA...</div>
<div class="t" style="left:475.5px;top:821.8px;font-size:18.5px;color:#3a3d40;letter-spacing:0.14px;">Statistical Fcst Qty incl. S...</div>
<div class="t" style="left:915.4px;top:821.8px;font-size:18.5px;color:#3a3d40;letter-spacing:0.28px;transform:translateX(-100%);">1,649.255187</div>
<div class="t" style="left:1119.4px;top:821.8px;font-size:18.5px;color:#3a3d40;letter-spacing:0.28px;transform:translateX(-100%);">659.701853</div>
<div class="t" style="left:1323.0px;top:821.8px;font-size:18.5px;color:#3a3d40;letter-spacing:0.28px;transform:translateX(-100%);">659.701853</div>
<div class="t" style="left:22.8px;top:853.1px;font-size:18.5px;color:#32363a;transform:translateX(-50%);">11</div>
<div class="t" style="left:79.0px;top:853.1px;font-size:18.5px;color:#a8a8a8;">Guangzhou</div>
<div class="t" style="left:227.4px;top:853.1px;font-size:18.5px;color:#383b3e;letter-spacing:-0.1px;">FAMILY 300-MUSIC DOCKS</div>
<div class="t" style="left:475.5px;top:853.1px;font-size:18.5px;color:#3a3d40;letter-spacing:0.14px;">Actuals Qty</div>
<div class="t" style="left:915.4px;top:853.1px;font-size:18.5px;color:#3a3d40;letter-spacing:0.28px;transform:translateX(-100%);">561</div>
<div class="t" style="left:1119.4px;top:853.1px;font-size:18.5px;color:#3a3d40;letter-spacing:0.28px;transform:translateX(-100%);"></div>
<div class="t" style="left:1323.0px;top:853.1px;font-size:18.5px;color:#3a3d40;letter-spacing:0.28px;transform:translateX(-100%);"></div>
<div class="t" style="left:22.8px;top:884.5px;font-size:18.5px;color:#32363a;transform:translateX(-50%);">12</div>
<div class="t" style="left:79.0px;top:884.5px;font-size:18.5px;color:#a8a8a8;">Guangzhou</div>
<div class="t" style="left:227.4px;top:884.5px;font-size:18.5px;color:#a8a8a8;letter-spacing:-0.1px;">FAMILY 300-MUSIC DOCKS</div>
<div class="t" style="left:475.5px;top:884.5px;font-size:18.5px;color:#3a3d40;letter-spacing:0.14px;">Statistical Fcst Qty incl. S...</div>
<div class="t" style="left:915.4px;top:884.5px;font-size:18.5px;color:#3a3d40;letter-spacing:0.28px;transform:translateX(-100%);">1,263.220001</div>
<div class="t" style="left:1119.4px;top:884.5px;font-size:18.5px;color:#3a3d40;letter-spacing:0.28px;transform:translateX(-100%);">713.800001</div>
<div class="t" style="left:1323.0px;top:884.5px;font-size:18.5px;color:#3a3d40;letter-spacing:0.28px;transform:translateX(-100%);">713.800001</div>
<div class="t" style="left:22.8px;top:915.9px;font-size:18.5px;color:#32363a;transform:translateX(-50%);">13</div>
<div class="t" style="left:79.0px;top:915.9px;font-size:18.5px;color:#383b3e;">Plant Frankfurt</div>
<div class="t" style="left:227.4px;top:915.9px;font-size:18.5px;color:#383b3e;letter-spacing:-0.1px;">FAMILY 100-HEADPHONES</div>
<div class="t" style="left:475.5px;top:915.9px;font-size:18.5px;color:#3a3d40;letter-spacing:0.14px;">Actuals Qty</div>
<div class="t" style="left:915.4px;top:915.9px;font-size:18.5px;color:#3a3d40;letter-spacing:0.28px;transform:translateX(-100%);">337.58428</div>
<div class="t" style="left:1119.4px;top:915.9px;font-size:18.5px;color:#3a3d40;letter-spacing:0.28px;transform:translateX(-100%);">337.58428</div>
<div class="t" style="left:1323.0px;top:915.9px;font-size:18.5px;color:#3a3d40;letter-spacing:0.28px;transform:translateX(-100%);">337.58428</div>
<div class="t" style="left:22.8px;top:947.2px;font-size:18.5px;color:#32363a;transform:translateX(-50%);">14</div>
<div class="t" style="left:79.0px;top:947.2px;font-size:18.5px;color:#a8a8a8;">Plant Frankfurt</div>
<div class="t" style="left:227.4px;top:947.2px;font-size:18.5px;color:#a8a8a8;letter-spacing:-0.1px;">FAMILY 100-HEADPHONES</div>
<div class="t" style="left:475.5px;top:947.2px;font-size:18.5px;color:#3a3d40;letter-spacing:0.14px;">Statistical Fcst Qty incl. S...</div>
<div class="t" style="left:915.4px;top:947.2px;font-size:18.5px;color:#3a3d40;letter-spacing:0.28px;transform:translateX(-100%);">481.537051</div>
<div class="t" style="left:1119.4px;top:947.2px;font-size:18.5px;color:#3a3d40;letter-spacing:0.28px;transform:translateX(-100%);">118.482142</div>
<div class="t" style="left:1323.0px;top:947.2px;font-size:18.5px;color:#3a3d40;letter-spacing:0.28px;transform:translateX(-100%);">118.482142</div>
<div class="t" style="left:22.8px;top:978.6px;font-size:18.5px;color:#32363a;transform:translateX(-50%);">15</div>
<div class="t" style="left:79.0px;top:978.6px;font-size:18.5px;color:#383b3e;">Rotterdam</div>
<div class="t" style="left:227.4px;top:978.6px;font-size:18.5px;color:#a8a8a8;letter-spacing:-0.1px;">FAMILY 100-HEADPHONES</div>
<div class="t" style="left:475.5px;top:978.6px;font-size:18.5px;color:#3a3d40;letter-spacing:0.14px;">Actuals Qty</div>
<div class="t" style="left:915.4px;top:978.6px;font-size:18.5px;color:#3a3d40;letter-spacing:0.28px;transform:translateX(-100%);">1,012.752842</div>
<div class="t" style="left:1119.4px;top:978.6px;font-size:18.5px;color:#3a3d40;letter-spacing:0.28px;transform:translateX(-100%);">1,012.752842</div>
<div class="t" style="left:1323.0px;top:978.6px;font-size:18.5px;color:#3a3d40;letter-spacing:0.28px;transform:translateX(-100%);">1,012.752842</div>
<div class="t" style="left:22.8px;top:1009.9px;font-size:18.5px;color:#32363a;transform:translateX(-50%);">16</div>
<div class="t" style="left:79.0px;top:1009.9px;font-size:18.5px;color:#a8a8a8;">Rotterdam</div>
<div class="t" style="left:227.4px;top:1009.9px;font-size:18.5px;color:#a8a8a8;letter-spacing:-0.1px;">FAMILY 100-HEADPHONES</div>
<div class="t" style="left:475.5px;top:1009.9px;font-size:18.5px;color:#3a3d40;letter-spacing:0.14px;">Statistical Fcst Qty incl. S...</div>
<div class="t" style="left:915.4px;top:1009.9px;font-size:18.5px;color:#3a3d40;letter-spacing:0.28px;transform:translateX(-100%);">1,070.177334</div>
<div class="t" style="left:1119.4px;top:1009.9px;font-size:18.5px;color:#3a3d40;letter-spacing:0.28px;transform:translateX(-100%);">200.633334</div>
<div class="t" style="left:1323.0px;top:1009.9px;font-size:18.5px;color:#3a3d40;letter-spacing:0.28px;transform:translateX(-100%);">200.633334</div>
<div class="t" style="left:22.8px;top:1041.3px;font-size:18.5px;color:#32363a;transform:translateX(-50%);">17</div>
<div class="t" style="left:79.0px;top:1041.3px;font-size:18.5px;color:#a8a8a8;">Rotterdam</div>
<div class="t" style="left:227.4px;top:1041.3px;font-size:18.5px;color:#383b3e;letter-spacing:-0.1px;">FAMILY 200-HOME THEA...</div>
<div class="t" style="left:475.5px;top:1041.3px;font-size:18.5px;color:#3a3d40;letter-spacing:0.14px;">Actuals Qty</div>
<div class="t" style="left:915.4px;top:1041.3px;font-size:18.5px;color:#3a3d40;letter-spacing:0.28px;transform:translateX(-100%);">989.555</div>
<div class="t" style="left:1119.4px;top:1041.3px;font-size:18.5px;color:#3a3d40;letter-spacing:0.28px;transform:translateX(-100%);">989.555</div>
<div class="t" style="left:1323.0px;top:1041.3px;font-size:18.5px;color:#3a3d40;letter-spacing:0.28px;transform:translateX(-100%);">989.555</div>
<div class="t" style="left:22.8px;top:1072.7px;font-size:18.5px;color:#32363a;transform:translateX(-50%);">18</div>
<div class="t" style="left:79.0px;top:1072.7px;font-size:18.5px;color:#a8a8a8;">Rotterdam</div>
<div class="t" style="left:227.4px;top:1072.7px;font-size:18.5px;color:#a8a8a8;letter-spacing:-0.1px;">FAMILY 200-HOME THEA...</div>
<div class="t" style="left:475.5px;top:1072.7px;font-size:18.5px;color:#3a3d40;letter-spacing:0.14px;">Statistical Fcst Qty incl. S...</div>
<div class="t" style="left:915.4px;top:1072.7px;font-size:18.5px;color:#3a3d40;letter-spacing:0.28px;transform:translateX(-100%);">1,649.255185</div>
<div class="t" style="left:1119.4px;top:1072.7px;font-size:18.5px;color:#3a3d40;letter-spacing:0.28px;transform:translateX(-100%);">659.701852</div>
<div class="t" style="left:1323.0px;top:1072.7px;font-size:18.5px;color:#3a3d40;letter-spacing:0.28px;transform:translateX(-100%);">659.701852</div>
<div class="t" style="left:22.8px;top:1104.0px;font-size:18.5px;color:#32363a;transform:translateX(-50%);">19</div>
<div class="t" style="left:79.0px;top:1104.0px;font-size:18.5px;color:#a8a8a8;">Rotterdam</div>
<div class="t" style="left:227.4px;top:1104.0px;font-size:18.5px;color:#383b3e;letter-spacing:-0.1px;">FAMILY 300-MUSIC DOCKS</div>
<div class="t" style="left:475.5px;top:1104.0px;font-size:18.5px;color:#3a3d40;letter-spacing:0.14px;">Actuals Qty</div>
<div class="t" style="left:915.4px;top:1104.0px;font-size:18.5px;color:#3a3d40;letter-spacing:0.28px;transform:translateX(-100%);">466</div>
<div class="t" style="left:1119.4px;top:1104.0px;font-size:18.5px;color:#3a3d40;letter-spacing:0.28px;transform:translateX(-100%);"></div>
<div class="t" style="left:1323.0px;top:1104.0px;font-size:18.5px;color:#3a3d40;letter-spacing:0.28px;transform:translateX(-100%);"></div>
<div class="t" style="left:22.8px;top:1135.4px;font-size:18.5px;color:#32363a;transform:translateX(-50%);">20</div>
<div class="t" style="left:79.0px;top:1135.4px;font-size:18.5px;color:#a8a8a8;">Rotterdam</div>
<div class="t" style="left:227.4px;top:1135.4px;font-size:18.5px;color:#a8a8a8;letter-spacing:-0.1px;">FAMILY 300-MUSIC DOCKS</div>
<div class="t" style="left:475.5px;top:1135.4px;font-size:18.5px;color:#3a3d40;letter-spacing:0.14px;">Statistical Fcst Qty incl. S...</div>
<div class="t" style="left:915.4px;top:1135.4px;font-size:18.5px;color:#3a3d40;letter-spacing:0.28px;transform:translateX(-100%);">1,263.22</div>
<div class="t" style="left:1119.4px;top:1135.4px;font-size:18.5px;color:#3a3d40;letter-spacing:0.28px;transform:translateX(-100%);">713.8</div>
<div class="t" style="left:1323.0px;top:1135.4px;font-size:18.5px;color:#3a3d40;letter-spacing:0.28px;transform:translateX(-100%);">713.8</div>
</div>
<svg class="b" style="left:1368.5px;top:475px;" width="20" height="20" viewBox="0 0 20 20"><path d="M1.5 9.5 H18" stroke="#0854a0" stroke-width="1.3"/><path d="M9.8 2 V17.2" stroke="#4a8ad0" stroke-width="1.7"/><g fill="none" stroke="#0854a0" stroke-width="1.5" stroke-linejoin="miter"><path d="M6.6 3.6 L9.8 0.9 L13 3.6"/><path d="M6.6 15.6 L9.8 18.3 L13 15.6"/><path d="M3.4 6.5 L0.8 9.5 L3.4 12.5"/><path d="M16.2 6.5 L18.8 9.5 L16.2 12.5"/></g><g fill="#0854a0"><path d="M9.8 1.2 L12 3.4 H7.6 Z"/><path d="M9.8 18 L12 15.8 H7.6 Z"/><path d="M1.1 9.5 L3.2 7.4 V11.6 Z"/><path d="M18.5 9.5 L16.4 7.4 V11.6 Z"/></g></svg>
<div class="t" style="left:1412.0px;top:473.6px;font-size:20.9px;color:#32363a;">Blog Test</div>
<div class="t" style="left:1509.0px;top:473.6px;font-size:20.9px;color:#32363a;">*</div>
<svg class="b" style="left:2212.1px;top:472.3px;" width="24" height="24" viewBox="0 0 24 24"><path d="M1.5 2.2 H16.8 L10.8 9.8 V14.2 L6.9 18 V9.8 Z" fill="none" stroke="#0854a0" stroke-width="1.5" stroke-linejoin="round"/><path d="M13.8 18.4 L17.1 21.6 L22.4 14.6" fill="none" stroke="#0854a0" stroke-width="1.8"/></svg>
<svg class="b" style="left:2267.8px;top:471.7px;" width="21" height="24" viewBox="0 0 21 24"><g fill="none" stroke="#0854a0"><path d="M0.8 3.5 H19.8" stroke-width="1.3"/><path d="M0.8 5.9 H19.8" stroke-width="1.3"/><path d="M7.6 2.2 H13" stroke-width="1.8"/><path d="M2.3 6 L3.8 22 H17 L18.5 6" stroke-width="1.5"/><path d="M6.4 10.2 V18.5 M10.4 10.2 V18.5 M14.4 10.2 V18.5" stroke-width="1"/></g></svg>
<svg class="b" style="left:2318.7px;top:472px;" width="24" height="24" viewBox="0 0 24 24"><g fill="none" stroke="#0854a0" stroke-width="1.4"><path d="M6.3 3 V10.8 M6.3 17.2 V21.2 M13.5 3 V3.7 M13.5 10.1 V21.2 M21.2 3 V12.5 M21.2 18.9 V21.2"/><path d="M13.5 10.1 V21.2" stroke-width="1.8"/><circle cx="6.3" cy="14" r="3.1"/><circle cx="13.5" cy="6.9" r="3.1"/><circle cx="21.2" cy="15.7" r="3.1"/></g></svg>
<svg class="b" style="left:2374.1px;top:471.4px;" width="24" height="24" viewBox="0 0 24 24"><g fill="none" stroke="#0854a0" stroke-width="1.4"><path d="M2.3 11.7 V3.3 H11"/><path d="M14.6 8.6 L21.2 2.6 M15 2.6 H21.2 V8.6"/><path d="M20.5 13.3 V21.2 H11.8"/><path d="M2.6 21.9 L8.6 15.9 M2.6 15.6 V21.9 H8.6"/></g></svg>
<div class="b" style="left:2420.4px;top:467px;width:42.90000000000009px;height:34.5px;background:#0854a0;border-radius:5px;"></div>
<svg class="b" style="left:2420px;top:467px;" width="44" height="35" viewBox="0 0 44 35"><rect x="14.2" y="6.9" width="15.8" height="21.7" fill="none" stroke="#fff" stroke-width="1.9"/><g fill="#fff"><circle cx="19.2" cy="11.4" r="1.9"/><circle cx="19.2" cy="16.6" r="1.9"/><circle cx="19.2" cy="22" r="1.9"/></g><g stroke="#fff" stroke-width="1.9"><path d="M22.8 11.4 H27 M22.8 16.6 H27 M22.8 22 H27"/></g></svg>
<svg class="b" style="left:2485px;top:474px;" width="24" height="24" viewBox="0 0 24 24"><circle cx="9.2" cy="9.2" r="7.2" fill="none" stroke="#a3b0bd" stroke-width="1.3"/><path d="M14.4 14.4 L20.5 20.5" stroke="#a3b0bd" stroke-width="2.2" stroke-linecap="round"/><path d="M5.4 9.2 H13 M9.2 5.4 V13" stroke="#a3b0bd" stroke-width="1.3"/></svg>
<svg class="b" style="left:2540px;top:474px;" width="24" height="24" viewBox="0 0 24 24"><circle cx="9.2" cy="9.2" r="7.2" fill="none" stroke="#a3b0bd" stroke-width="1.3"/><path d="M14.4 14.4 L20.5 20.5" stroke="#a3b0bd" stroke-width="2.2" stroke-linecap="round"/><path d="M5.4 9.2 H13" stroke="#a3b0bd" stroke-width="1.3"/></svg>
<div class="b" style="left:1334px;top:516px;width:1250px;height:264px;background:#ffffff;border-top:1.5px solid #e1e1e1;"></div>
<div class="b" style="left:1483px;top:538px;width:848px;height:1px;background:#b3b3b3;"></div>
<div class="t" style="left:1468.0px;top:532.1px;font-size:15px;color:#6a6d70;letter-spacing:0.6px;transform:translateX(-100%);">300,000.00</div>
<div class="b" style="left:1483px;top:597px;width:848px;height:1px;background:#b3b3b3;"></div>
<div class="t" style="left:1468.0px;top:590.6px;font-size:15px;color:#6a6d70;letter-spacing:0.6px;transform:translateX(-100%);">200,000.00</div>
<div class="b" style="left:1483px;top:654px;width:848px;height:1px;background:#b3b3b3;"></div>
<div class="t" style="left:1468.0px;top:647.8px;font-size:15px;color:#6a6d70;letter-spacing:0.6px;transform:translateX(-100%);">100,000.00</div>
<div class="b" style="left:1483px;top:711px;width:848px;height:1px;background:#b3b3b3;"></div>
<div class="t" style="left:1468.0px;top:705.2px;font-size:15px;color:#6a6d70;letter-spacing:0.6px;transform:translateX(-100%);">0.00</div>
<div class="b" style="left:1560px;top:658px;width:129px;height:54px;background:#5899da;"></div>
<div class="b" style="left:1842px;top:695px;width:129px;height:17px;background:#5899da;"></div>
<div class="b" style="left:2123px;top:606px;width:133px;height:107px;background:#5899da;border:2.5px solid #1a1a1a;"></div>
<div class="t" style="left:1624.5px;top:635.9px;font-size:15.5px;color:#32363a;letter-spacing:0.5px;transform:translateX(-50%);">95,500.66</div>
<div class="t" style="left:1907.0px;top:672.9px;font-size:15.5px;color:#32363a;letter-spacing:0.5px;transform:translateX(-50%);">30,179.70</div>
<div class="t" style="left:2189.0px;top:586.9px;font-size:15.5px;color:#32363a;letter-spacing:0.5px;transform:translateX(-50%);">180,688.97</div>
<div class="t" style="left:1366px;top:630px;font-size:15.5px;color:#6a6d70;letter-spacing:0.6px;transform:translate(-50%,-50%) rotate(-90deg);">Statistical Fcst Qt...</div>
<div class="t" style="left:1906.0px;top:741.5px;font-size:16px;color:#8c8c8c;letter-spacing:0.6px;transform:translateX(-50%);">Location ID / Product Family</div>
<div class="b" style="left:2352px;top:544px;width:19px;height:17px;background:#5899da;"></div>
<div class="t" style="left:2380.0px;top:544.3px;font-size:15.6px;color:#474a4d;letter-spacing:0.25px;">Statistical Fcst Qty (BG)</div>
<div class="t" style="left:2545.0px;top:533.5px;font-size:12px;color:#55585b;">now</div>
<div class="b" style="left:1312px;top:821px;width:1288px;height:2px;background:#dedede;"></div>
<div class="b" style="left:1312px;top:844px;width:1288px;height:21px;background:#ebeeee;"></div>
<div class="b" style="left:1848px;top:853.5px;width:89px;height:1.2999999999999545px;background:linear-gradient(90deg,rgba(8,84,160,0),#1f5a95);"></div>
<div class="b" style="left:1981px;top:853.5px;width:87px;height:1.2999999999999545px;background:linear-gradient(90deg,#1f5a95,rgba(8,84,160,0));"></div>
<div class="b" style="left:1950.0px;top:852.8px;width:2.2000000000000455px;height:2.2000000000000455px;background:#0b3a73;"></div>
<div class="b" style="left:1955.5px;top:852.8px;width:2.2000000000000455px;height:2.2000000000000455px;background:#0b3a73;"></div>
<div class="b" style="left:1961.0px;top:852.8px;width:2.2000000000000455px;height:2.2000000000000455px;background:#0b3a73;"></div>
<div class="b" style="left:1966.5px;top:852.8px;width:2.2000000000000455px;height:2.2000000000000455px;background:#0b3a73;"></div>
<svg class="b" style="left:1346.7px;top:885px;" width="20" height="20" viewBox="0 0 20 20"><path d="M1.5 9.5 H18" stroke="#0854a0" stroke-width="1.3"/><path d="M9.8 2 V17.2" stroke="#4a8ad0" stroke-width="1.7"/><g fill="none" stroke="#0854a0" stroke-width="1.5" stroke-linejoin="miter"><path d="M6.6 3.6 L9.8 0.9 L13 3.6"/><path d="M6.6 15.6 L9.8 18.3 L13 15.6"/><path d="M3.4 6.5 L0.8 9.5 L3.4 12.5"/><path d="M16.2 6.5 L18.8 9.5 L16.2 12.5"/></g><g fill="#0854a0"><path d="M9.8 1.2 L12 3.4 H7.6 Z"/><path d="M9.8 18 L12 15.8 H7.6 Z"/><path d="M1.1 9.5 L3.2 7.4 V11.6 Z"/><path d="M18.5 9.5 L16.4 7.4 V11.6 Z"/></g></svg>
<div class="t" style="left:1390.0px;top:883.7px;font-size:21.6px;color:#32363a;">Capacity Utilization</div>
<div class="b" style="left:1586px;top:879px;width:1px;height:32px;background:#d5d5d5;"></div>
<div class="t" style="left:1598.6px;top:884.0px;font-size:21.3px;color:#32363a;">Custom Alerts (8)</div>
<div class="b" style="left:1890px;top:877px;width:349px;height:35px;border:1.3px solid #89919a;border-radius:3px;background:#fff;"></div>
<div class="t" style="left:1906.0px;top:885.6px;font-size:18.2px;color:#8c8c8c;font-style:italic;">Search</div>
<svg class="b" style="left:2205px;top:886px;" width="22" height="22" viewBox="0 0 22 22"><circle cx="8.5" cy="8.5" r="7" fill="none" stroke="#0854a0" stroke-width="1.7"/><path d="M13.5 13.5 L20 20" stroke="#0854a0" stroke-width="2.2"/></svg>
<svg class="b" style="left:2263px;top:885px;" width="18" height="19" viewBox="0 0 18 19"><g stroke="#0854a0" stroke-width="1.5"><path d="M0.5 1.5 H16.5 M0.5 6 H16.5 M0.5 10.5 H16.5"/></g><path d="M4 14 L8.5 17.5 L13 14" fill="none" stroke="#0854a0" stroke-width="1.4"/></svg>
<svg class="b" style="left:2315px;top:884px;" width="23" height="23" viewBox="0 0 23 23"><g fill="none" stroke="#0854a0" stroke-width="1.35" stroke-linejoin="round"><circle cx="11.5" cy="11.2" r="4"/><path d="M19.23 9.15 L21.50 9.21 L21.50 13.19 L19.23 13.25 L18.42 15.22 L19.98 16.87 L17.17 19.68 L15.52 18.12 L13.55 18.93 L13.49 21.20 L9.51 21.20 L9.45 18.93 L7.48 18.12 L5.83 19.68 L3.02 16.87 L4.58 15.22 L3.77 13.25 L1.50 13.19 L1.50 9.21 L3.77 9.15 L4.58 7.18 L3.02 5.53 L5.83 2.72 L7.48 4.28 L9.45 3.47 L9.51 1.20 L13.49 1.20 L13.55 3.47 L15.52 4.28 L17.17 2.72 L19.98 5.53 L18.42 7.18 Z"/></g></svg>
<div class="b" style="left:2360px;top:879px;width:1px;height:32px;background:#d5d5d5;"></div>
<svg class="b" style="left:2380.8px;top:882.8px;" width="24" height="24" viewBox="0 0 24 24"><path d="M1.5 2.2 H16.8 L10.8 9.8 V14.2 L6.9 18 V9.8 Z" fill="none" stroke="#0854a0" stroke-width="1.5" stroke-linejoin="round"/><path d="M13.8 18.4 L17.1 21.6 L22.4 14.6" fill="none" stroke="#0854a0" stroke-width="1.8"/></svg>
<svg class="b" style="left:2436.9px;top:882.3px;" width="21" height="24" viewBox="0 0 21 24"><g fill="none" stroke="#0854a0"><path d="M0.8 3.5 H19.8" stroke-width="1.3"/><path d="M0.8 5.9 H19.8" stroke-width="1.3"/><path d="M7.6 2.2 H13" stroke-width="1.8"/><path d="M2.3 6 L3.8 22 H17 L18.5 6" stroke-width="1.5"/><path d="M6.4 10.2 V18.5 M10.4 10.2 V18.5 M14.4 10.2 V18.5" stroke-width="1"/></g></svg>
<svg class="b" style="left:2487.5px;top:882.1px;" width="24" height="24" viewBox="0 0 24 24"><g fill="none" stroke="#0854a0" stroke-width="1.4"><path d="M6.3 3 V10.8 M6.3 17.2 V21.2 M13.5 3 V3.7 M13.5 10.1 V21.2 M21.2 3 V12.5 M21.2 18.9 V21.2"/><path d="M13.5 10.1 V21.2" stroke-width="1.8"/><circle cx="6.3" cy="14" r="3.1"/><circle cx="13.5" cy="6.9" r="3.1"/><circle cx="21.2" cy="15.7" r="3.1"/></g></svg>
<svg class="b" style="left:2542.8px;top:881.5px;" width="24" height="24" viewBox="0 0 24 24"><g fill="none" stroke="#0854a0" stroke-width="1.4"><path d="M2.3 11.7 V3.3 H11"/><path d="M14.6 8.6 L21.2 2.6 M15 2.6 H21.2 V8.6"/><path d="M20.5 13.3 V21.2 H11.8"/><path d="M2.6 21.9 L8.6 15.9 M2.6 15.6 V21.9 H8.6"/></g></svg>
<div class="b" style="left:1312px;top:924px;width:1288px;height:1px;background:#dcdcdc;"></div>
<div class="b" style="left:1312px;top:925px;width:1288px;height:46px;background:#f2f2f2;border-bottom:1px solid #dcdcdc;"></div>
<div class="b" style="left:1325px;top:937px;width:22px;height:22px;border:1.3px solid #6a6d70;border-radius:3px;background:#fff;"></div>
<div class="t" style="left:1369.4px;top:939.1px;font-size:18.3px;color:#4a4d51;">Key Figure 1</div>
<div class="t" style="left:1961.0px;top:938.9px;font-size:18.6px;color:#4a4d51;transform:translateX(-100%);">Value 1</div>
<div class="t" style="left:1984.4px;top:938.9px;font-size:18.5px;color:#4a4d51;">Severity</div>
<div class="t" style="left:2292.4px;top:938.7px;font-size:18.8px;color:#4a4d51;">Subscription</div>
<div class="b" style="left:1312px;top:971px;width:1278px;height:277px;background:#ffffff;"></div>
<div class="b" style="left:1325px;top:983px;width:22px;height:22px;border:1.3px solid #6a6d70;border-radius:3px;background:#fff;"></div>
<div class="t" style="left:1368.6px;top:985.2px;font-size:19px;color:#32363a;font-weight:bold;">Capacity Utilization</div>
<div class="t" style="left:1939.5px;top:985.2px;font-size:19px;color:#6a6d70;font-weight:bold;transform:translateX(-100%);">69.66</div>
<div class="t" style="left:1944.6px;top:985.2px;font-size:19px;color:#8c8c8c;">%</div>
<div class="t" style="left:1983.6px;top:985.0px;font-size:18.9px;color:#df740f;">Medium</div>
<div class="t" style="left:2291.0px;top:985.2px;font-size:19px;color:#1f68bb;">Alert: Capacity Utilization</div>
<div class="t" style="left:1370.0px;top:1037.0px;font-size:18.9px;color:#6a6d70;">Calculation Level:</div>
<div class="t" style="left:1775.5px;top:1037.1px;font-size:18.8px;color:#6a6d70;">Restricted:</div>
<div class="t" style="left:2182.0px;top:1037.3px;font-size:18.5px;color:#6a6d70;">Snoozed:</div>
<div class="t" style="left:1370.0px;top:1098.0px;font-size:18.9px;color:#6a6d70;">Refresh Time:</div>
<div class="t" style="left:1370.0px;top:1125.0px;font-size:18.9px;color:#32363a;">2 minutes ago</div>
<div class="t" style="left:1775.5px;top:1098.1px;font-size:18.8px;color:#6a6d70;">Versions / Scenarios:</div>
<div class="t" style="left:1775.5px;top:1125.1px;font-size:18.8px;color:#32363a;">Base Version</div>
<div class="b" style="left:1312px;top:1152px;width:1278px;height:2px;background:#e5e5e5;"></div>
<div class="b" style="left:1325px;top:1165px;width:22px;height:22px;border:1.3px solid #6a6d70;border-radius:3px;background:#fff;"></div>
<div class="t" style="left:1368.6px;top:1167.2px;font-size:19px;color:#32363a;font-weight:bold;">Capacity Utilization</div>
<div class="t" style="left:1939.5px;top:1167.2px;font-size:19px;color:#6a6d70;font-weight:bold;transform:translateX(-100%);">59.37</div>
<div class="t" style="left:1944.6px;top:1167.2px;font-size:19px;color:#8c8c8c;">%</div>
<div class="t" style="left:1983.6px;top:1167.0px;font-size:18.9px;color:#df740f;">Medium</div>
<div class="t" style="left:2291.0px;top:1167.2px;font-size:19px;color:#1f68bb;">Alert: Capacity Utilization</div>
<div class="t" style="left:1370.0px;top:1219.0px;font-size:18.9px;color:#6a6d70;">Calculation Level:</div>
<div class="t" style="left:1775.5px;top:1219.1px;font-size:18.8px;color:#6a6d70;">Restricted:</div>
<div class="t" style="left:2182.0px;top:1219.3px;font-size:18.5px;color:#6a6d70;">Snoozed:</div>
<div class="b" style="left:2590px;top:865px;width:10px;height:105px;background:#7f7f7f;border-radius:5px 0 0 5px;"></div>
<div class="b" style="left:2450px;top:56px;width:150px;height:1192px;background:linear-gradient(90deg,rgba(0,0,0,0) 0%,rgba(0,0,0,0.015) 45%,rgba(0,0,0,0.05) 80%,rgba(0,0,0,0.1) 100%);pointer-events:none;"></div>
</body></html>
